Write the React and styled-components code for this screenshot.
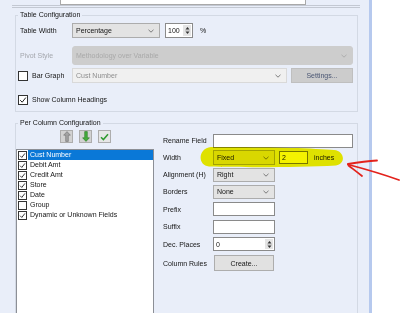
import React from "react";
import styled, { createGlobalStyle } from "styled-components";

const GlobalStyle = createGlobalStyle`
  html, body { margin: 0; padding: 0; background: #fff; }
  body {
    font-family: "Liberation Sans", Arial, sans-serif;
    font-size: 7px;
    color: #151515;
  }
`;

const fields = [
  { name: "Cust Number", checked: true, selected: true },
  { name: "Debit Amt", checked: true },
  { name: "Credit Amt", checked: true },
  { name: "Store", checked: true },
  { name: "Date", checked: true },
  { name: "Group", checked: false },
  { name: "Dynamic or Unknown Fields", checked: true },
];

function Chevron({ color = "#5f5f5f" }) {
  return (
    <svg width="6" height="4" viewBox="0 0 6 4">
      <polyline points="0.5,0.8 3,3.2 5.5,0.8" fill="none" stroke={color} strokeWidth="0.8" />
    </svg>
  );
}

function Tick({ size = 10 }) {
  return (
    <svg width={size - 2} height={size - 2} viewBox="0 0 8 8">
      <polyline points="1.2,4.2 3.2,6.2 6.8,1.6" fill="none" stroke="#222" strokeWidth="1" />
    </svg>
  );
}

function SpinArrows() {
  return (
    <SpinSide>
      <svg width="5" height="9" viewBox="0 0 5 9">
        <polygon points="2.5,1 4.5,3.4 0.5,3.4" fill="#333" />
        <line x1="0" y1="4.5" x2="5" y2="4.5" stroke="#b5b5b5" strokeWidth="0.6" />
        <polygon points="2.5,8 4.5,5.6 0.5,5.6" fill="#333" />
      </svg>
    </SpinSide>
  );
}

function Combo({ w, h, value, variant }) {
  return (
    <ComboBox $w={w} $h={h} $variant={variant}>
      <span>{value}</span>
      <Chevron color={variant === "disabled" ? "#a5a5a5" : "#5f5f5f"} />
    </ComboBox>
  );
}

function CheckBox({ checked, size = 10 }) {
  return <Box $size={size}>{checked && <Tick size={size} />}</Box>;
}

function App() {
  return (
    <Page>
      <GlobalStyle />
      <Panel>
        <TopBox />
        <DoubleRule />

        <Group $top={3} $height={101}>
          <Legend>Table Configuration</Legend>
          <Row $top={4} $h={15}>
            <Label>Table Width</Label>
            <Combo w={88} h={15} value="Percentage" />
            <Spin $w={28} $h={15} $ml={5}>
              <span>100</span>
              <SpinArrows />
            </Spin>
            <Unit $ml={7}>%</Unit>
          </Row>
          <Row $top={8} $h={19}>
            <Label $muted>Pivot Style</Label>
            <Combo w={281} h={19} value="Methodology over Variable" variant="disabled" />
          </Row>
          <Row $top={3} $h={15}>
            <CheckLabel $w={54}>
              <CheckBox />
              <span>Bar Graph</span>
            </CheckLabel>
            <Combo w={215} h={15} value="Cust Number" variant="muted" />
            <Button $w={62} $h={15} $ml={4} $variant="muted">Settings...</Button>
          </Row>
          <Row $top={10} $h={13}>
            <CheckLabel>
              <CheckBox checked />
              <span>Show Column Headings</span>
            </CheckLabel>
          </Row>
        </Group>

        <Group $top={7} $height={260}>
          <Legend>Per Column Configuration</Legend>
          <Columns>
            <LeftCol>
              <ToolRow>
                <ToolButton>
                  <svg width="8" height="11" viewBox="0 0 8 11">
                    <path d="M4 0.6 L7.4 4.2 L5.3 4.2 L5.3 10.4 L2.7 10.4 L2.7 4.2 L0.6 4.2 Z" fill="#a3a3a3" stroke="#6f6f6f" strokeWidth="0.6" />
                  </svg>
                </ToolButton>
                <ToolButton>
                  <svg width="8" height="11" viewBox="0 0 8 11">
                    <path d="M4 10.4 L7.4 6.8 L5.3 6.8 L5.3 0.6 L2.7 0.6 L2.7 6.8 L0.6 6.8 Z" fill="#45ad3c" stroke="#2a7a25" strokeWidth="0.6" />
                  </svg>
                </ToolButton>
                <ToolButton $light>
                  <svg width="9" height="8" viewBox="0 0 9 8">
                    <polyline points="1,4.2 3.4,6.6 8,1.2" fill="none" stroke="#2f9a2f" strokeWidth="1.5" />
                  </svg>
                </ToolButton>
              </ToolRow>
              <FieldList>
                {fields.map((f) => (
                  <ListItem key={f.name}>
                    <CheckBox checked={f.checked} size={9} />
                    <ItemText $selected={f.selected}>{f.name}</ItemText>
                  </ListItem>
                ))}
              </FieldList>
            </LeftCol>

            <Form>
              <FormRow>
                <FormLabel>Rename Field</FormLabel>
                <TextBox $w={140} $h={14} />
              </FormRow>
              <FormRow>
                <FormLabel>Width</FormLabel>
                <Combo w={62} h={15} value="Fixed" />
                <TextBox $w={29} $h={13} $ml={4} $yellow>2</TextBox>
                <Unit $ml={6}>inches</Unit>
              </FormRow>
              <FormRow>
                <FormLabel>Alignment (H)</FormLabel>
                <Combo w={62} h={14} value="Right" />
              </FormRow>
              <FormRow>
                <FormLabel>Borders</FormLabel>
                <Combo w={62} h={14} value="None" />
              </FormRow>
              <FormRow>
                <FormLabel>Prefix</FormLabel>
                <TextBox $w={62} $h={14} />
              </FormRow>
              <FormRow>
                <FormLabel>Suffix</FormLabel>
                <TextBox $w={62} $h={14} />
              </FormRow>
              <FormRow>
                <FormLabel>Dec. Places</FormLabel>
                <Spin $w={62} $h={14}>
                  <span>0</span>
                  <SpinArrows />
                </Spin>
              </FormRow>
              <FormRow>
                <FormLabel>Column Rules</FormLabel>
                <Button $w={60} $h={16} $ml={1}>Create...</Button>
              </FormRow>
            </Form>
          </Columns>
        </Group>
      </Panel>
      <WhiteSide />

      <Highlight width="150" height="26" viewBox="0 0 150 26">
        <path
          d="M13 2 C 60 1.5, 115 3, 136 5 C 147 6, 148 19, 138 20.5 C 100 22.5, 45 22.5, 11 21.5 C -1 20.5, 0 3, 13 2 Z"
          fill="#f4f200"
        />
      </Highlight>
      <Arrow width="400" height="313" viewBox="0 0 400 313">
        <g stroke="#e3221c" strokeWidth="1.8" strokeLinecap="round" fill="none">
          <path d="M348 164 C 360 162, 368 161, 377 160.5" />
          <path d="M348 164.5 C 365 169, 385 175, 399 180" />
          <path d="M348.5 165.5 C 353 169, 357 172, 362 176" />
        </g>
      </Arrow>
    </Page>
  );
}

const Page = styled.div`
  position: relative;
  width: 400px;
  height: 313px;
  overflow: hidden;
  display: flex;
  background: #fff;
`;

const Panel = styled.div`
  width: 369px;
  flex: none;
  background: #e9eef9;
  border-right: 3px solid #b6c9ee;
  display: flex;
  flex-direction: column;
`;

const WhiteSide = styled.div`
  flex: 1;
  background: #fff;
`;

const TopBox = styled.div`
  flex: none;
  margin-left: 60px;
  width: 246px;
  height: 5px;
  box-sizing: border-box;
  background: #fff;
  border: 1px solid #a9a9a9;
  border-top: none;
`;

const DoubleRule = styled.div`
  flex: none;
  margin-left: 12px;
  width: 348px;
  height: 3px;
  box-sizing: border-box;
  border-top: 1px solid #c3c8d2;
  border-bottom: 1px solid #c3c8d2;
`;

const Group = styled.fieldset`
  flex: none;
  margin: ${(p) => p.$top}px 0 0 15px;
  width: 343px;
  height: ${(p) => p.$height}px;
  box-sizing: border-box;
  border: 1px solid #d3d9e4;
  padding: 0;
  min-width: 0;
`;

const Legend = styled.legend`
  margin-left: 2px;
  padding: 0 2px;
  font-size: 7px;
  line-height: 8px;
  color: #151515;
`;

const Row = styled.div`
  display: flex;
  align-items: center;
  margin-top: ${(p) => p.$top}px;
  height: ${(p) => p.$h}px;
  padding-left: 4px;
`;

const Label = styled.div`
  width: 52px;
  flex: none;
  color: ${(p) => (p.$muted ? "#a4a7ad" : "#151515")};
`;

const CheckLabel = styled.label`
  display: flex;
  align-items: center;
  gap: 4px;
  margin-left: -2px;
  ${(p) => p.$w && `width: ${p.$w}px;`}
  flex: none;
`;

const Box = styled.span`
  flex: none;
  width: ${(p) => p.$size}px;
  height: ${(p) => p.$size}px;
  box-sizing: border-box;
  border: 1px solid #333;
  background: #fff;
  display: flex;
  align-items: center;
  justify-content: center;
`;

const ComboBox = styled.div`
  flex: none;
  width: ${(p) => p.$w}px;
  height: ${(p) => p.$h}px;
  box-sizing: border-box;
  display: flex;
  align-items: center;
  justify-content: space-between;
  padding: 0 5px 0 3px;
  background: ${(p) =>
    p.$variant === "disabled" ? "#cdcdcd" : p.$variant === "muted" ? "#f0f0f0" : "#e3e3e3"};
  border: 1px solid
    ${(p) =>
      p.$variant === "disabled" ? "#cdcdcd" : p.$variant === "muted" ? "#d9d9d9" : "#acacac"};
  border-radius: ${(p) => (p.$variant === "disabled" ? "3px" : "0")};
  color: ${(p) => (p.$variant === "disabled" ? "#a9a9a9" : p.$variant === "muted" ? "#8d8d8d" : "#151515")};
`;

const Spin = styled.div`
  flex: none;
  width: ${(p) => p.$w}px;
  height: ${(p) => p.$h}px;
  margin-left: ${(p) => p.$ml || 0}px;
  box-sizing: border-box;
  display: flex;
  align-items: center;
  justify-content: space-between;
  padding: 1px 1px 1px 2px;
  background: #fff;
  border: 1px solid #8a8a8a;
`;

const SpinSide = styled.div`
  width: 8px;
  align-self: stretch;
  background: #e4e4e4;
  display: flex;
  align-items: center;
  justify-content: center;
`;

const Unit = styled.span`
  margin-left: ${(p) => p.$ml || 0}px;
`;

const Button = styled.div`
  flex: none;
  width: ${(p) => p.$w}px;
  height: ${(p) => p.$h}px;
  margin-left: ${(p) => p.$ml || 0}px;
  box-sizing: border-box;
  display: flex;
  align-items: center;
  justify-content: center;
  background: ${(p) => (p.$variant === "muted" ? "#cccccc" : "#e1e1e1")};
  border: 1px solid ${(p) => (p.$variant === "muted" ? "#bfbfbf" : "#adadad")};
  color: ${(p) => (p.$variant === "muted" ? "#4a5673" : "#151515")};
`;

const Columns = styled.div`
  display: flex;
  gap: 9px;
`;

const LeftCol = styled.div`
  width: 138px;
  flex: none;
`;

const ToolRow = styled.div`
  display: flex;
  gap: 6px;
  margin-top: 3px;
  padding-left: 44px;
`;

const ToolButton = styled.div`
  width: 13px;
  height: 13px;
  box-sizing: border-box;
  display: flex;
  align-items: center;
  justify-content: center;
  background: ${(p) => (p.$light ? "#e6e6e6" : "#d2d2d2")};
  border: 1px solid #adadad;
`;

const FieldList = styled.div`
  margin-top: 6px;
  height: 200px;
  box-sizing: border-box;
  background: #fff;
  border: 1px solid #8c8f96;
  padding-left: 1px;
`;

const ListItem = styled.div`
  display: flex;
  align-items: center;
  height: 10px;
`;

const ItemText = styled.span`
  flex: 1;
  height: 10px;
  line-height: 10px;
  margin-left: 1px;
  padding-left: 2px;
  white-space: nowrap;
  background: ${(p) => (p.$selected ? "#0a78d7" : "transparent")};
  color: ${(p) => (p.$selected ? "#fff" : "#151515")};
`;

const Form = styled.div`
  margin-top: 5px;
  display: grid;
  grid-template-rows: 17px 17px 17px 17px 18px 17px 18px 20px;
`;

const FormRow = styled.div`
  display: flex;
  align-items: center;
`;

const FormLabel = styled.div`
  width: 50px;
  flex: none;
`;

const TextBox = styled.div`
  flex: none;
  width: ${(p) => p.$w}px;
  height: ${(p) => p.$h}px;
  margin-left: ${(p) => p.$ml || 0}px;
  box-sizing: border-box;
  padding-left: 2px;
  line-height: ${(p) => p.$h - 2}px;
  background: ${(p) => (p.$yellow ? "#fff" : "#fff")};
  border: 1px solid ${(p) => (p.$yellow ? "#7c7c4a" : "#8a8a8a")};
`;

const Highlight = styled.svg`
  position: absolute;
  left: 198px;
  top: 145px;
  mix-blend-mode: multiply;
  pointer-events: none;
`;

const Arrow = styled.svg`
  position: absolute;
  left: 0;
  top: 0;
  pointer-events: none;
`;

export default App;
